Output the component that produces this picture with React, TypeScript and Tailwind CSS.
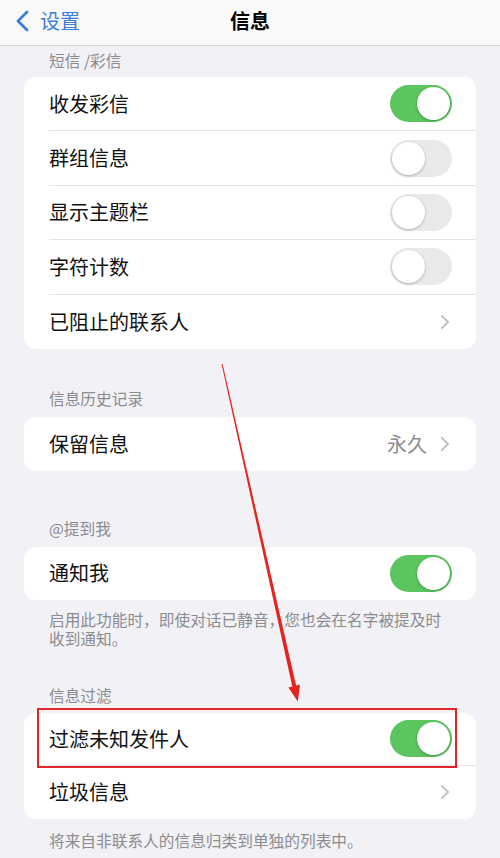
import React from "react";

const font = { fontFamily: '"Noto Sans CJK SC", "Noto Sans", sans-serif' };

function Toggle({ on }: { on: boolean }) {
  return on ? (
    <div className="relative w-[62px] h-[37px] rounded-full bg-[#5cc55f] shrink-0">
      <div className="absolute right-[2px] top-[2px] w-[33px] h-[33px] rounded-full bg-white shadow-[0_1px_3px_rgba(0,0,0,0.25)]" />
    </div>
  ) : (
    <div className="relative w-[62px] h-[37px] rounded-full bg-[#e9e9eb] shrink-0">
      <div className="absolute left-[2px] top-[2px] w-[33px] h-[33px] rounded-full bg-white shadow-[0_1px_3px_rgba(0,0,0,0.25)]" />
    </div>
  );
}

function Chevron() {
  return (
    <svg width="10" height="16" viewBox="0 0 10 16" className="shrink-0">
      <polyline points="2,2 8,8 2,14" fill="none" stroke="#c4c4c8" strokeWidth="2.2" strokeLinecap="round" strokeLinejoin="round" />
    </svg>
  );
}

function Row({ label, right, last, h = "h-[54.4px]" }: { label: string; right: React.ReactNode; last?: boolean; h?: string }) {
  return (
    <div className={`ml-[25px] pr-[24px] ${h} flex items-center justify-between ${last ? "" : "border-b border-[#e2e2e5]"}`}>
      <span className="text-[20px] leading-[28px] text-[#111]">{label}</span>
      {right}
    </div>
  );
}

export default function App() {
  return (
    <div className="relative w-[500px] h-[858px] overflow-hidden bg-[#f1f1f6]" style={font}>
      {/* Nav */}
      <div className="relative h-[46px] bg-[#f9f9f9] border-b border-[#d6d6d8] flex items-center pb-[4px]">
        <div className="flex items-center pl-[14px]">
          <svg width="16" height="22" viewBox="0 0 16 22">
            <polyline points="13,2 4,11 13,20" fill="none" stroke="#3d7ddb" strokeWidth="2.8" strokeLinecap="round" strokeLinejoin="round" />
          </svg>
          <span className="ml-[10px] text-[20px] leading-[28px] text-[#3d7ddb]">设置</span>
        </div>
        <div className="absolute inset-0 flex items-center justify-center pointer-events-none pb-[4px]">
          <span className="text-[20px] leading-[28px] font-bold text-black">信息</span>
        </div>
      </div>

      {/* Section 1 */}
      <div className="pl-[49px] pt-[5px] pb-[6px] text-[15.7px] leading-[20px] text-[#8c8c90]">短信 /彩信</div>
      <div className="mx-[24px] bg-white rounded-[12px]">
        <Row label="收发彩信" right={<Toggle on />} />
        <Row label="群组信息" right={<Toggle on={false} />} />
        <Row label="显示主题栏" right={<Toggle on={false} />} />
        <Row label="字符计数" right={<Toggle on={false} />} />
        <Row label="已阻止的联系人" right={<div className="pr-[2px]"><Chevron /></div>} last />
      </div>

      {/* Section 2 */}
      <div className="pl-[49px] pt-[40px] pb-[8px] text-[15.7px] leading-[20px] text-[#8c8c90]">信息历史记录</div>
      <div className="mx-[24px] bg-white rounded-[12px]">
        <Row
          label="保留信息"
          right={
            <div className="flex items-center gap-[13px] pr-[2px]">
              <span className="text-[20px] leading-[28px] text-[#8c8c90]">永久</span>
              <Chevron />
            </div>
          }
          last
          h="h-[54px]"
        />
      </div>

      {/* Section 3 */}
      <div className="pl-[49px] pt-[48px] pb-[8px] text-[15.7px] leading-[20px] text-[#8c8c90]">@提到我</div>
      <div className="mx-[24px] bg-white rounded-[12px]">
        <Row label="通知我" right={<Toggle on />} last h="h-[53px]" />
      </div>
      <div className="pl-[49px] w-[452px] pt-[10px] text-[15.7px] leading-[19px] text-[#8c8c90]">
        启用此功能时，即使对话已静音，您也会在名字被提及时收到通知。
      </div>

      {/* Section 4 */}
      <div className="pl-[49px] pt-[38px] pb-[7px] text-[15.7px] leading-[20px] text-[#8c8c90]">信息过滤</div>
      <div className="relative mx-[24px] bg-white rounded-[12px]">
        <Row label="过滤未知发件人" right={<Toggle on />} h="h-[53px]" />
        <Row label="垃圾信息" right={<div className="pr-[2px]"><Chevron /></div>} last h="h-[53px]" />
        <div className="absolute left-[13px] top-[-5px] w-[420px] h-[60px] border-2 border-[#e3262a]" />
      </div>
      <div className="pl-[49px] pt-[12px] text-[15.7px] leading-[19px] text-[#8c8c90]">将来自非联系人的信息归类到单独的列表中。</div>

      {/* Red arrow */}
      <svg className="absolute left-0 top-0 pointer-events-none" width="500" height="858" viewBox="0 0 500 858">
        <polygon
          points="221.6,364 222.6,364 296.1,685.5 300,684.6 297.8,701.6 288.4,687.4 292.3,686.5"
          fill="#e6231d"
        />
      </svg>
    </div>
  );
}
